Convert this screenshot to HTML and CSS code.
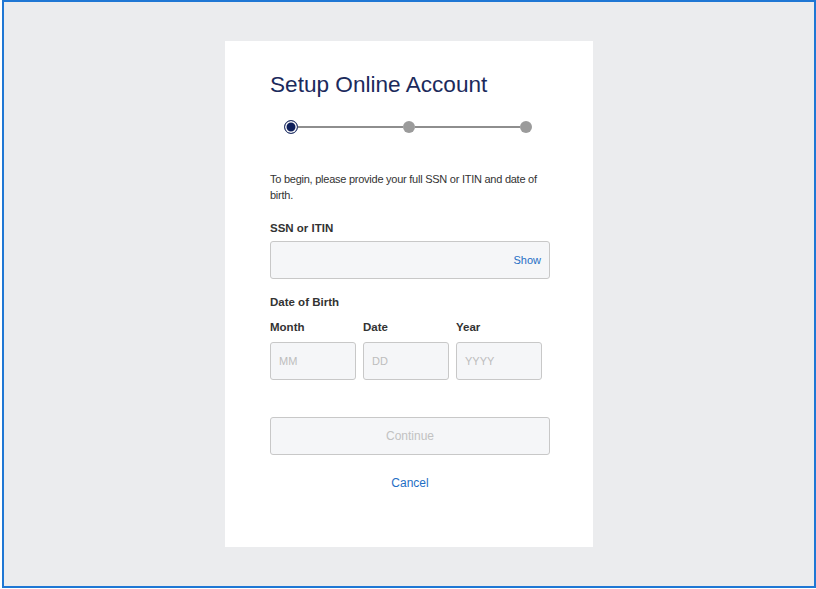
FILE: index.html
```html
<!DOCTYPE html>
<html lang="en">
<head>
<meta charset="utf-8">
<title>Setup Online Account</title>
<link rel="stylesheet" href="styles.css">
</head>
<body>
<div class="frame">
  <div class="card">
    <h1 class="title">Setup Online Account</h1>
    <div class="stepper">
      <span class="dot dot-active"></span>
      <span class="line"></span>
      <span class="dot"></span>
      <span class="line"></span>
      <span class="dot"></span>
    </div>
    <p class="intro">To begin, please provide your full SSN or ITIN and date of birth.</p>
    <label class="label label-ssn">SSN or ITIN</label>
    <div class="input input-ssn"><span class="show">Show</span></div>
    <div class="label label-dob">Date of Birth</div>
    <div class="dob">
      <div class="field">
        <span class="label">Month</span>
        <div class="input small">MM</div>
      </div>
      <div class="field">
        <span class="label">Date</span>
        <div class="input small">DD</div>
      </div>
      <div class="field">
        <span class="label">Year</span>
        <div class="input small">YYYY</div>
      </div>
    </div>
    <div class="button">Continue</div>
    <div class="cancel">Cancel</div>
  </div>
</div>
</body>
</html>
```

FILE: styles.css
```css
html, body {
  margin: 0;
  padding: 0;
  background: #ffffff;
}
body {
  font-family: "Liberation Sans", Arial, sans-serif;
  color: #333333;
}
.frame {
  box-sizing: border-box;
  margin-left: 2px;
  width: 814px;
  height: 588px;
  border: 2px solid #1f77d4;
  background: #ebecee;
  display: flex;
  justify-content: center;
  align-items: flex-start;
}
.card {
  box-sizing: border-box;
  margin-top: 39px;
  width: 368px;
  height: 506px;
  background: #ffffff;
  padding: 30px 43px 0 45px;
  display: flex;
  flex-direction: column;
}
.title {
  margin: 0;
  font-size: 22.6px;
  line-height: 28px;
  font-weight: normal;
  color: #1b2a5c;
  white-space: nowrap;
}
.stepper {
  display: flex;
  align-items: center;
  margin: 21px 0 0 14px;
  height: 14px;
}
.dot {
  box-sizing: border-box;
  width: 12px;
  height: 12px;
  border-radius: 50%;
  background: #9b9b9b;
  flex: none;
}
.dot-active {
  width: 14px;
  height: 14px;
  background: #0e1f5b;
  border: 1.5px solid #2b3a6b;
  box-shadow: inset 0 0 0 1.5px #ffffff;
}
.line {
  width: 105px;
  height: 2px;
  background: #8e8e8e;
  flex: none;
}
.intro {
  margin: 37px 0 0;
  font-size: 11px;
  line-height: 16px;
  letter-spacing: -0.25px;
  color: #333333;
}
.label {
  display: block;
  font-size: 11.5px;
  line-height: 16px;
  font-weight: bold;
  color: #333333;
}
.label-ssn {
  margin-top: 17px;
}
.input {
  box-sizing: border-box;
  height: 38px;
  border: 1px solid #c8c8c8;
  border-radius: 3px;
  background: #f5f6f8;
}
.input-ssn {
  margin-top: 5px;
  display: flex;
  align-items: center;
  justify-content: flex-end;
  padding-right: 8px;
}
.show {
  font-size: 11px;
  color: #1f6fc5;
}
.label-dob {
  margin-top: 15px;
}
.dob {
  display: grid;
  grid-template-columns: 86px 86px 86px;
  column-gap: 7px;
  margin-top: 9px;
}
.field .input {
  margin-top: 7px;
}
.small {
  display: flex;
  align-items: center;
  padding-left: 8px;
  font-size: 11px;
  color: #bdbdbd;
}
.button {
  box-sizing: border-box;
  margin-top: 37px;
  height: 38px;
  border: 1px solid #c8c8c8;
  border-radius: 3px;
  background: #f5f6f8;
  display: flex;
  align-items: center;
  justify-content: center;
  font-size: 12px;
  color: #c2c2c2;
}
.cancel {
  margin-top: 20px;
  text-align: center;
  font-size: 12px;
  line-height: 16px;
  color: #1f6fc5;
}
```
